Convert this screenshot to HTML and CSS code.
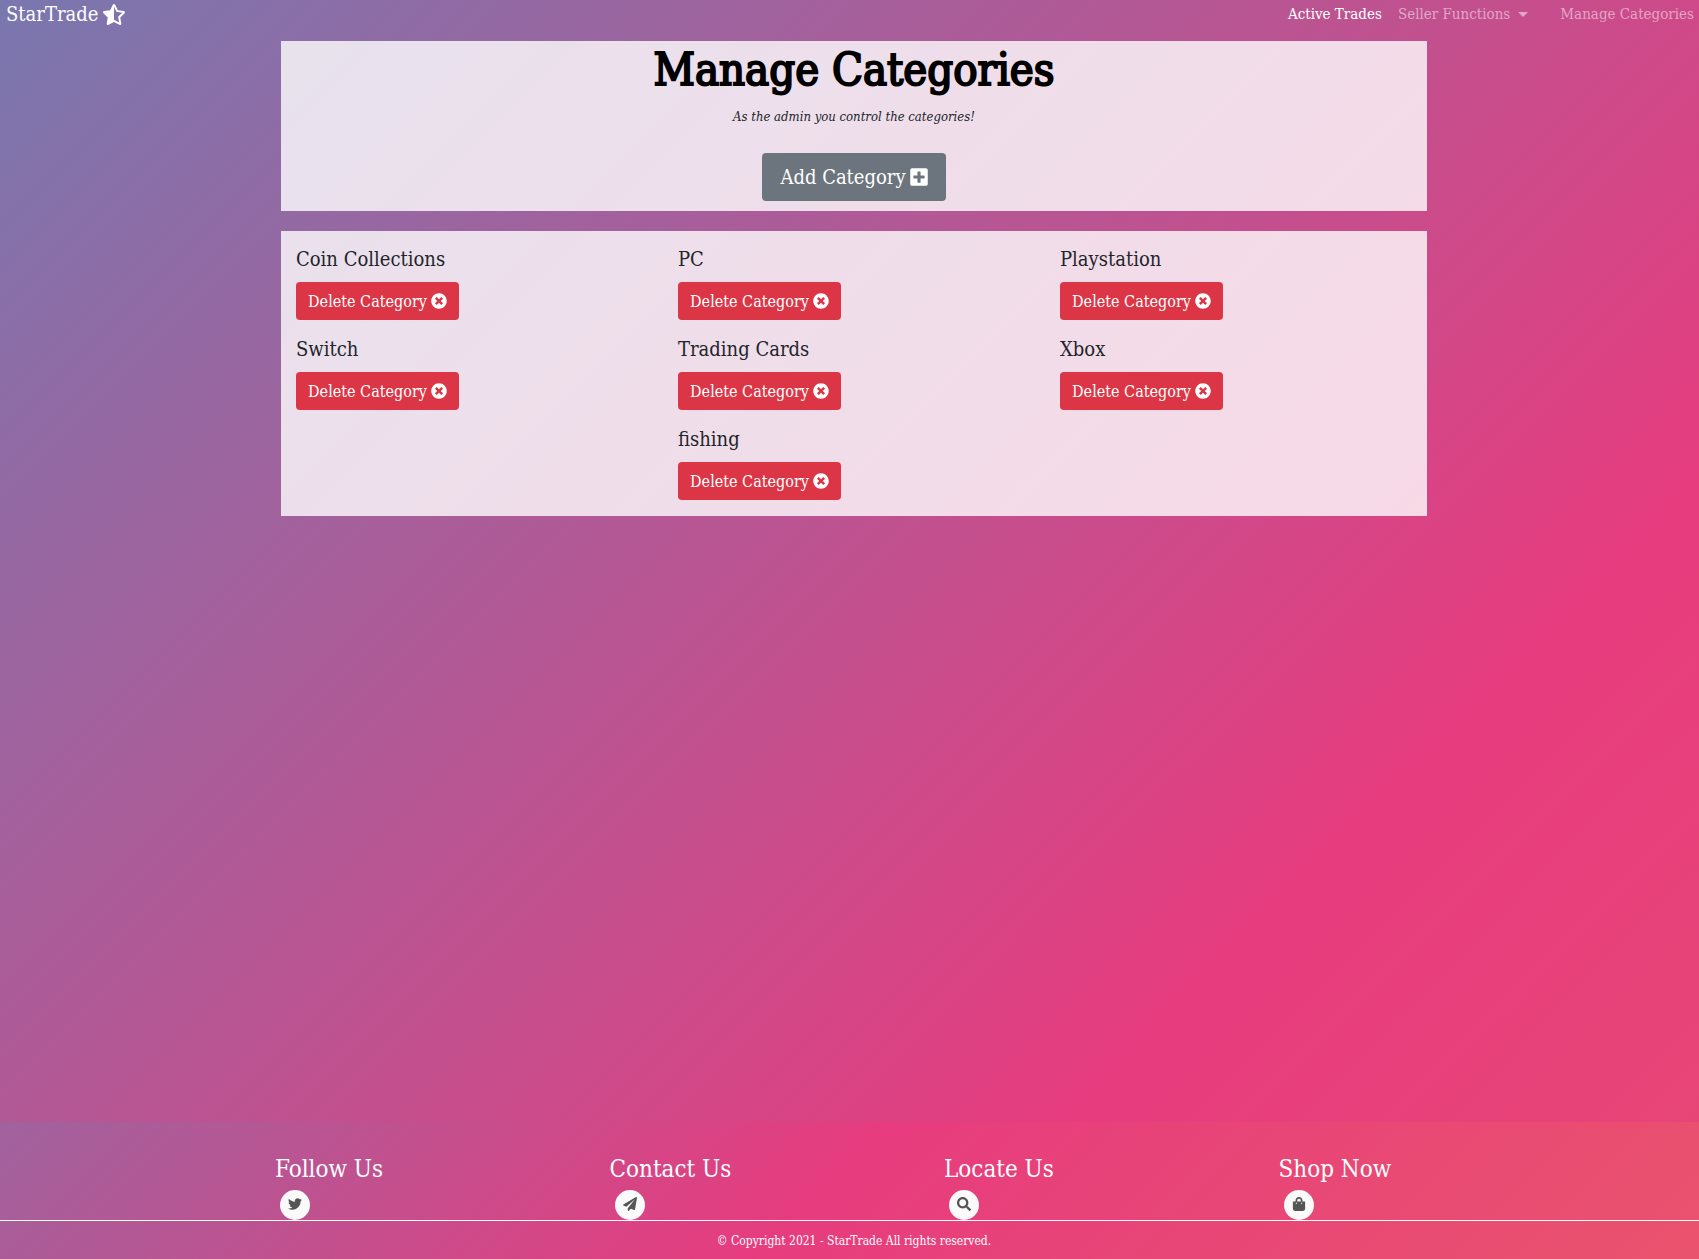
FILE: index.html
```html
<!DOCTYPE html>
<html lang="en">
<head>
<meta charset="utf-8">
<meta name="viewport" content="width=device-width, initial-scale=1">
<title>StarTrade - Manage Categories</title>
<link rel="stylesheet" href="styles.css">
</head>
<body>
<svg class="sprite" aria-hidden="true">
  <symbol id="times" viewBox="0 0 512 512"><path d="M256 8C119 8 8 119 8 256s111 248 248 248 248-111 248-248S393 8 256 8zm121.6 313.1c4.7 4.7 4.7 12.3 0 17L338 377.6c-4.7 4.7-12.3 4.7-17 0L256 312l-65.1 65.6c-4.7 4.7-12.3 4.7-17 0L134.4 338c-4.7-4.7-4.7-12.3 0-17l65.6-65-65.6-65.1c-4.7-4.7-4.7-12.3 0-17l39.6-39.6c4.7-4.7 12.3-4.7 17 0l65 65.7 65.1-65.6c4.7-4.7 12.3-4.7 17 0l39.6 39.6c4.7 4.7 4.7 12.3 0 17L312 256l65.6 65.1z"/></symbol>
</svg>
<header class="navbar">
  <a class="brand" href="#">StarTrade
    <svg class="brand-icon" viewBox="0 0 536 512" aria-hidden="true"><path d="M508.55 171.51L362.18 150.2 296.77 17.81C290.89 5.98 279.42 0 267.95 0c-11.4 0-22.79 5.9-28.69 17.81l-65.43 132.38-146.38 21.29c-26.25 3.8-36.77 36.09-17.74 54.59l105.89 103-25.06 145.48C86.98 495.33 103.57 512 122.15 512c4.93 0 10-1.17 14.87-3.75l130.95-68.68 130.94 68.7c4.86 2.55 9.92 3.71 14.83 3.71 18.6 0 35.22-16.61 31.66-37.4l-25.03-145.49 105.91-102.98c19.04-18.5 8.52-50.8-17.73-54.6zm-121.74 123.2l-18.12 17.62 4.28 24.88 19.52 113.45-102.13-53.59-22.38-11.74.03-317.19 51.03 103.29 11.18 22.63 25.01 3.64 114.23 16.63-82.65 80.38z"/></svg>
  </a>
  <nav class="nav-links">
    <a class="nav-link active" href="#">Active Trades</a>
    <a class="nav-link dropdown" href="#">Seller Functions</a>
    <a class="nav-link" href="#">Manage Categories</a>
  </nav>
</header>
<main class="content">
  <section class="panel intro">
    <h1 class="title">Manage Categories</h1>
    <p class="subtitle">As the admin you control the categories!</p>
    <button class="btn btn-add" type="button">Add Category
      <svg class="add-icon" viewBox="0 0 448 512" aria-hidden="true"><path d="M400 32H48C21.5 32 0 53.5 0 80v352c0 26.5 21.5 48 48 48h352c26.5 0 48-21.5 48-48V80c0-26.5-21.5-48-48-48zm-32 252c0 6.6-5.4 12-12 12h-92v92c0 6.6-5.4 12-12 12h-56c-6.6 0-12-5.4-12-12v-92H92c-6.6 0-12-5.4-12-12v-56c0-6.6 5.4-12 12-12h92v-92c0-6.6 5.4-12 12-12h56c6.6 0 12 5.4 12 12v92h92c6.6 0 12 5.4 12 12v56z"/></svg>
    </button>
  </section>
  <section class="panel categories">
    <div class="category"><h2 class="name">Coin Collections</h2><button class="btn btn-delete" type="button">Delete Category <svg class="delete-icon" aria-hidden="true"><use href="#times"/></svg></button></div>
    <div class="category"><h2 class="name">PC</h2><button class="btn btn-delete" type="button">Delete Category <svg class="delete-icon" aria-hidden="true"><use href="#times"/></svg></button></div>
    <div class="category"><h2 class="name">Playstation</h2><button class="btn btn-delete" type="button">Delete Category <svg class="delete-icon" aria-hidden="true"><use href="#times"/></svg></button></div>
    <div class="category"><h2 class="name">Switch</h2><button class="btn btn-delete" type="button">Delete Category <svg class="delete-icon" aria-hidden="true"><use href="#times"/></svg></button></div>
    <div class="category"><h2 class="name">Trading Cards</h2><button class="btn btn-delete" type="button">Delete Category <svg class="delete-icon" aria-hidden="true"><use href="#times"/></svg></button></div>
    <div class="category"><h2 class="name">Xbox</h2><button class="btn btn-delete" type="button">Delete Category <svg class="delete-icon" aria-hidden="true"><use href="#times"/></svg></button></div>
    <div class="category last"><h2 class="name">fishing</h2><button class="btn btn-delete" type="button">Delete Category <svg class="delete-icon" aria-hidden="true"><use href="#times"/></svg></button></div>
  </section>
</main>
<footer class="footer">
  <div class="footer-columns">
    <div class="footer-column"><h2 class="footer-heading">Follow Us</h2>
      <a class="circle" href="#" aria-label="Twitter"><svg class="circle-icon" viewBox="0 0 512 512"><path d="M459.37 151.716c.325 4.548.325 9.097.325 13.645 0 138.72-105.583 298.558-298.558 298.558-59.452 0-114.68-17.219-161.137-47.106 8.447.974 16.568 1.299 25.34 1.299 49.055 0 94.213-16.568 130.274-44.832-46.132-.975-84.792-31.188-98.112-72.772 6.498.974 12.995 1.624 19.818 1.624 9.421 0 18.843-1.3 27.614-3.573-48.081-9.747-84.143-51.98-84.143-102.985v-1.299c13.969 7.797 30.214 12.67 47.431 13.319-28.264-18.843-46.781-51.005-46.781-87.391 0-19.492 5.197-37.36 14.294-52.954 51.655 63.675 129.3 105.258 216.365 109.807-1.624-7.797-2.599-15.918-2.599-24.04 0-57.828 46.782-104.934 104.934-104.934 30.213 0 57.502 12.67 76.67 33.137 23.715-4.548 46.456-13.32 66.599-25.34-7.798 24.366-24.366 44.833-46.132 57.827 21.117-2.273 41.584-8.122 60.426-16.243-14.292 20.791-32.161 39.308-52.628 54.253z"/></svg></a></div>
    <div class="footer-column"><h2 class="footer-heading">Contact Us</h2>
      <a class="circle" href="#" aria-label="Contact"><svg class="circle-icon" viewBox="0 0 512 512"><path d="M476 3.2L12.5 270.6c-18.1 10.4-15.8 35.6 2.2 43.2L121 358.4l287.3-253.2c5.5-4.9 13.3 2.6 8.6 8.3L176 407v80.5c0 23.6 28.5 32.9 42.5 15.8L282 426l124.6 52.2c14.2 6 30.4-2.9 33-18.2l72-432C515 7.8 493.3-6.8 476 3.2z"/></svg></a></div>
    <div class="footer-column"><h2 class="footer-heading">Locate Us</h2>
      <a class="circle" href="#" aria-label="Locate"><svg class="circle-icon" viewBox="0 0 512 512"><path d="M505 442.7L405.3 343c-4.5-4.5-10.6-7-17-7H372c27.6-35.3 44-79.7 44-128C416 93.1 322.9 0 208 0S0 93.1 0 208s93.1 208 208 208c48.3 0 92.7-16.4 128-44v16.3c0 6.4 2.5 12.5 7 17l99.7 99.7c9.4 9.4 24.6 9.4 33.9 0l28.3-28.3c9.4-9.4 9.4-24.6.1-34zM208 336c-70.7 0-128-57.2-128-128 0-70.7 57.2-128 128-128 70.7 0 128 57.2 128 128 0 70.7-57.2 128-128 128z"/></svg></a></div>
    <div class="footer-column"><h2 class="footer-heading">Shop Now</h2>
      <a class="circle" href="#" aria-label="Shop"><svg class="circle-icon" viewBox="0 0 448 512"><path d="M352 160v-32C352 57.42 294.579 0 224 0 153.42 0 96 57.42 96 128v32H0v272c0 44.183 35.817 80 80 80h288c44.183 0 80-35.817 80-80V160h-96zm-192-32c0-35.29 28.71-64 64-64s64 28.71 64 64v32H160v-32zm160 120c-13.255 0-24-10.745-24-24s10.745-24 24-24 24 10.745 24 24-10.745 24-24 24zm-192 0c-13.255 0-24-10.745-24-24s10.745-24 24-24 24 10.745 24 24-10.745 24-24 24z"/></svg></a></div>
  </div>
  <p class="copyright">© Copyright 2021 - StarTrade All rights reserved.</p>
</footer>
</body>
</html>
```
FILE: styles.css
```css
* {
  box-sizing: border-box;
}

html {
  min-height: 100%;
}

body,
.footer {
  background: linear-gradient(-45deg, #ee7752, #e73c7e, #23a6d5, #23d5ab);
  background-size: 400% 400%;
  background-position: 74.5% 50%;
}

body {
  display: flex;
  flex-direction: column;
  min-height: 100vh;
  margin: 0;
  color: #212529;
  font-family: "Roboto Slab", "DejaVu Serif Condensed", "DejaVu Serif", serif;
  font-size: 15px;
  line-height: 24px;
}

h1,
h2,
p {
  margin: 0;
  font-weight: 400;
}

a {
  color: inherit;
  text-decoration: none;
}

svg {
  fill: currentColor;
}

.sprite {
  display: none;
}

.navbar {
  display: flex;
  align-items: center;
  justify-content: space-between;
  height: 28px;
  padding: 0 5px 0 6px;
  color: #fff;
}

.brand {
  display: flex;
  align-items: center;
  gap: 5px;
  font-size: 20px;
}

.brand-icon {
  width: 22px;
  height: 21px;
}

.nav-links {
  display: flex;
  gap: 16px;
}

.nav-link {
  color: rgba(255, 255, 255, 0.5);
}

.nav-link.active {
  color: #fff;
}

.dropdown {
  display: flex;
  align-items: center;
  gap: 8px;
  margin-right: 16px;
}

.dropdown::after {
  content: "";
  border: 5px solid transparent;
  border-top-color: currentColor;
  border-bottom: 0;
}

.content {
  display: flex;
  flex: 1;
  flex-direction: column;
  align-items: center;
  gap: 20px;
  padding: 13px 0 20px 9px;
}

.panel {
  width: 100%;
  max-width: 1146px;
  background: rgba(255, 255, 255, 0.8);
}

.intro {
  display: flex;
  flex-direction: column;
  align-items: center;
  padding-bottom: 10px;
}

.title {
  color: #000;
  font-size: 45px;
  line-height: 58px;
  -webkit-text-stroke: 2px #000;
}

.subtitle {
  margin: 6px 0 24px;
  font-size: 13px;
  font-style: italic;
}

.btn {
  display: flex;
  align-items: center;
  justify-content: center;
  gap: 4px;
  border: 0;
  border-radius: 4px;
  color: #fff;
  font-family: inherit;
  white-space: nowrap;
}

.btn-add {
  width: 184px;
  height: 48px;
  padding: 0;
  background: #6c757d;
  font-size: 20px;
}

.add-icon {
  width: 18px;
  height: 20px;
}

.btn-delete {
  width: 163px;
  height: 38px;
  padding: 0;
  background: #dc3545;
  font-size: 16px;
}

.delete-icon {
  width: 16px;
  height: 16px;
}

.categories {
  display: grid;
  grid-template-columns: repeat(3, 1fr);
  row-gap: 16px;
  padding: 15px 0 16px;
}

.category {
  padding-left: 15px;
}

.last {
  grid-column: 2;
}

.name {
  margin-bottom: 10px;
  font-size: 20px;
  line-height: 26px;
}

.footer {
  color: #fff;
}

.footer-columns {
  display: grid;
  grid-template-columns: repeat(4, 1fr);
  padding: 32px 86px 0 275px;
  border-bottom: 1px solid #fff;
}

.footer-heading {
  margin-bottom: 6px;
  font-size: 24px;
  line-height: 30px;
}

.circle {
  display: flex;
  align-items: center;
  justify-content: center;
  width: 30px;
  height: 30px;
  margin-left: 5px;
  padding-bottom: 2px;
  border-radius: 50%;
  background: #fafafa;
  color: #555;
}

.circle-icon {
  width: 14px;
  height: 14px;
}

.copyright {
  padding: 8px 0 6px 9px;
  font-size: 12px;
  text-align: center;
}
```
